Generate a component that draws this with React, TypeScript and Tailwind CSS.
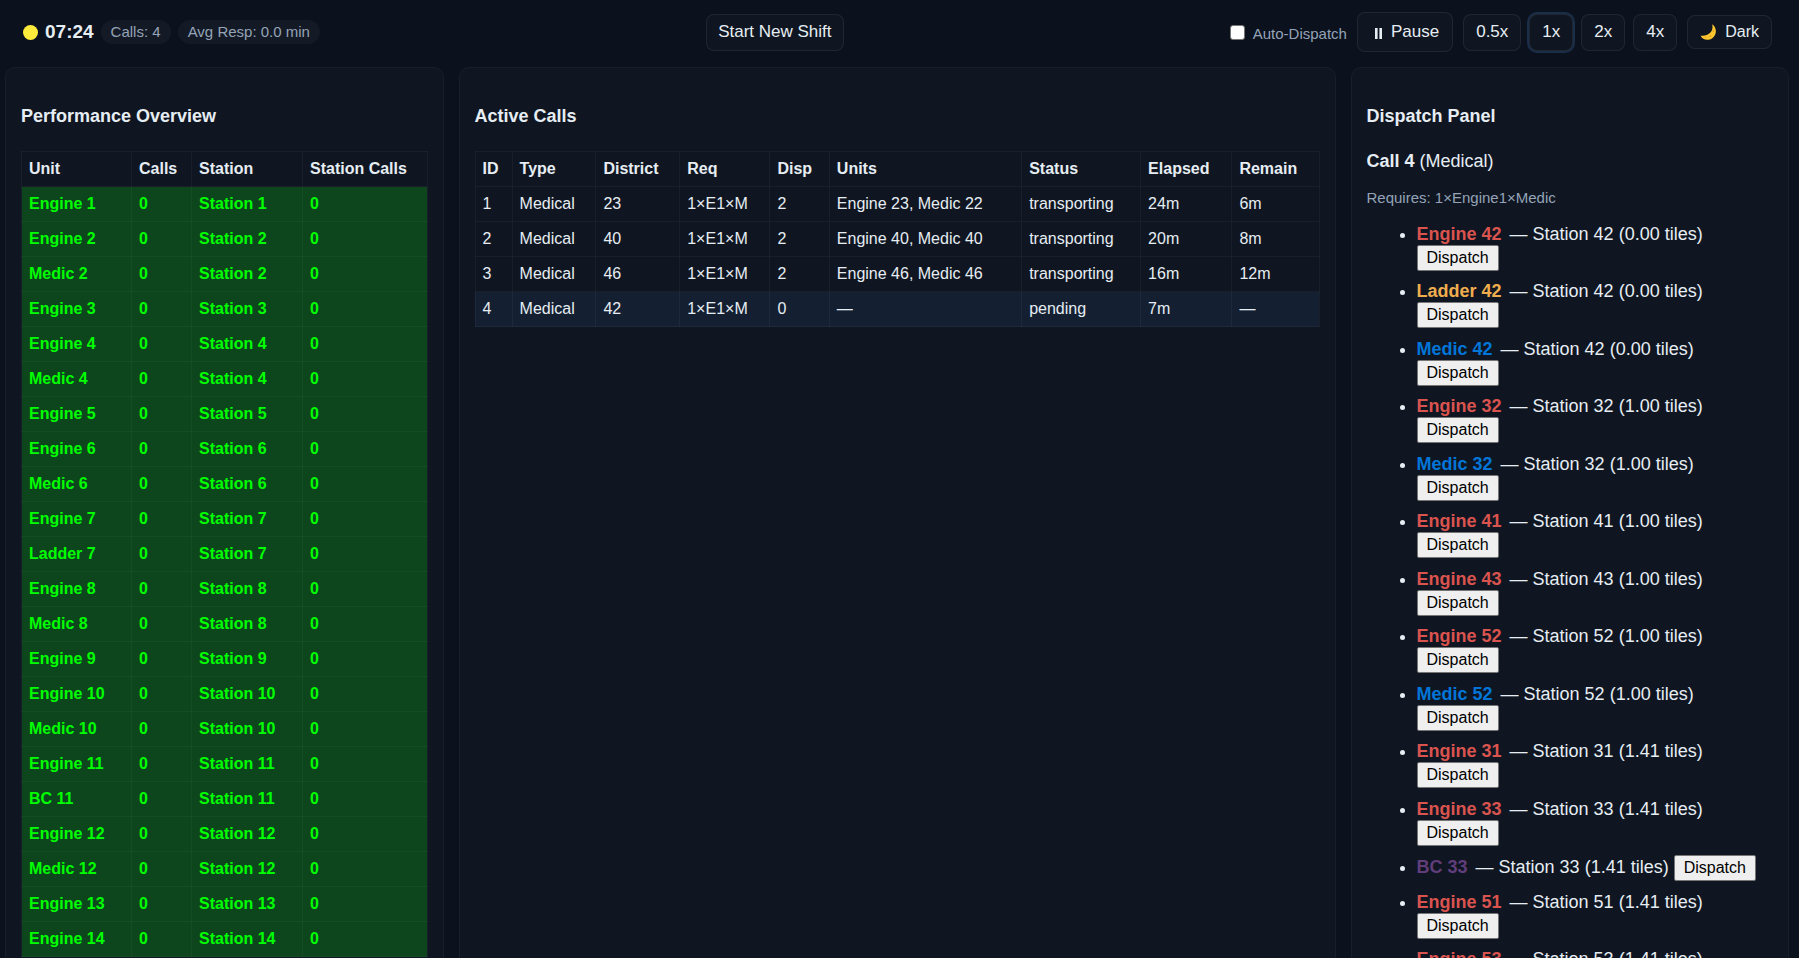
import { clsx } from 'clsx'

interface Unit {
  name: string
  station: number
}

interface Call {
  id: number
  type: string
  district: number
  req: string
  disp: number
  units: string
  status: string
  elapsed: string
  remain: string
}

interface Candidate extends Unit {
  tiles: string
}

const SPEEDS = ['0.5x', '1x', '2x', '4x']

const UNITS: Unit[] = [
  { name: 'Engine 1', station: 1 },
  { name: 'Engine 2', station: 2 },
  { name: 'Medic 2', station: 2 },
  { name: 'Engine 3', station: 3 },
  { name: 'Engine 4', station: 4 },
  { name: 'Medic 4', station: 4 },
  { name: 'Engine 5', station: 5 },
  { name: 'Engine 6', station: 6 },
  { name: 'Medic 6', station: 6 },
  { name: 'Engine 7', station: 7 },
  { name: 'Ladder 7', station: 7 },
  { name: 'Engine 8', station: 8 },
  { name: 'Medic 8', station: 8 },
  { name: 'Engine 9', station: 9 },
  { name: 'Engine 10', station: 10 },
  { name: 'Medic 10', station: 10 },
  { name: 'Engine 11', station: 11 },
  { name: 'BC 11', station: 11 },
  { name: 'Engine 12', station: 12 },
  { name: 'Medic 12', station: 12 },
  { name: 'Engine 13', station: 13 },
  { name: 'Engine 14', station: 14 },
]

const CALLS: Call[] = [
  { id: 1, type: 'Medical', district: 23, req: '1×E1×M', disp: 2, units: 'Engine 23, Medic 22', status: 'transporting', elapsed: '24m', remain: '6m' },
  { id: 2, type: 'Medical', district: 40, req: '1×E1×M', disp: 2, units: 'Engine 40, Medic 40', status: 'transporting', elapsed: '20m', remain: '8m' },
  { id: 3, type: 'Medical', district: 46, req: '1×E1×M', disp: 2, units: 'Engine 46, Medic 46', status: 'transporting', elapsed: '16m', remain: '12m' },
  { id: 4, type: 'Medical', district: 42, req: '1×E1×M', disp: 0, units: '—', status: 'pending', elapsed: '7m', remain: '—' },
]

const CANDIDATES: Candidate[] = [
  { name: 'Engine 42', station: 42, tiles: '0.00' },
  { name: 'Ladder 42', station: 42, tiles: '0.00' },
  { name: 'Medic 42', station: 42, tiles: '0.00' },
  { name: 'Engine 32', station: 32, tiles: '1.00' },
  { name: 'Medic 32', station: 32, tiles: '1.00' },
  { name: 'Engine 41', station: 41, tiles: '1.00' },
  { name: 'Engine 43', station: 43, tiles: '1.00' },
  { name: 'Engine 52', station: 52, tiles: '1.00' },
  { name: 'Medic 52', station: 52, tiles: '1.00' },
  { name: 'Engine 31', station: 31, tiles: '1.41' },
  { name: 'Engine 33', station: 33, tiles: '1.41' },
  { name: 'BC 33', station: 33, tiles: '1.41' },
  { name: 'Engine 51', station: 51, tiles: '1.41' },
  { name: 'Engine 53', station: 53, tiles: '1.41' },
]

const TYPE_COLORS: Record<string, string> = {
  Engine: 'text-[#d9534f]',
  Ladder: 'text-[#f0ad4e]',
  Medic: 'text-[#0275d8]',
  BC: 'text-[#613d7c]',
}

const btn = 'rounded-lg border border-white/7 bg-[#0f1621] text-[#e6edf3]'
const pill = 'rounded-full bg-white/4 px-[10px] text-[15px] leading-6 text-[#94a3b8]'
const panel = 'min-w-0 rounded-[10px] border border-white/4 bg-[#0f1621] px-[15px] pt-9'
const heading = 'mb-[23px] text-[18px] leading-6 font-bold'
const cell = 'border border-white/4 px-[7px] py-[7px] text-left'

function TopBar() {
  return (
    <header className="flex h-16 items-center justify-between pr-[27px] pl-[23px]">
      <div className="flex items-center gap-[7px]">
        <span className="h-[15px] w-[15px] rounded-full bg-[#ffeb3b]" />
        <span className="text-[19px] leading-6 font-bold">07:24</span>
        <span className={pill}>Calls: 4</span>
        <span className={pill}>Avg Resp: 0.0 min</span>
      </div>
      <button type="button" className={clsx(btn, 'h-[37px] px-[11px] text-[17px]')}>
        Start New Shift
      </button>
      <div className="flex items-center">
        <label className="mr-[10px] flex items-center gap-2 text-[15px] text-[#94a3b8]">
          <input
            type="checkbox"
            className="h-[15px] w-[15px] appearance-none rounded-[3px] border border-[#767676] bg-white"
          />
          <span className="pt-1">Auto-Dispatch</span>
        </label>
        <button type="button" className={clsx(btn, 'mr-[10px] flex h-10 items-center gap-2 pr-[13px] pl-4 text-[17px]')}>
          <svg width="9" height="16" viewBox="0 0 9 16" fill="currentColor" aria-hidden="true">
            <path d="M1 4h2.600v11H1zM5.400 4H8v11H5.400z" />
          </svg>
          Pause
        </button>
        <div className="mr-[10px] flex items-center gap-2">
          {SPEEDS.map((s) => (
            <button
              key={s}
              type="button"
              className={clsx(btn, 'h-[37px] px-3 text-[17px]', s === '1x' && 'ring-2 ring-[#1a2d49]')}
            >
              {s}
            </button>
          ))}
        </div>
        <button type="button" className={clsx(btn, 'flex h-[34px] items-center gap-2 px-3 text-[16px]')}>
          <svg width="17" height="18" viewBox="0 0 18 18" aria-hidden="true">
            <path
              d="M12.800 .8C18 4 18.200 12 13 15.600C8.500 18.600 2.500 17.400 .6 12.600C3.500 13.300 8 12.600 10.800 9.800C13.200 7.400 13.800 3.600 12.800 .8Z"
              fill="#fdc52e"
            />
            <circle cx="14" cy="8" r="0.900" fill="#e9a520" />
            <circle cx="11" cy="13.500" r="1" fill="#e9a520" />
            <circle cx="6" cy="14.500" r="0.700" fill="#e9a520" />
          </svg>
          Dark
        </button>
      </div>
    </header>
  )
}

function Performance() {
  return (
    <section className={panel}>
      <h3 className={heading}>Performance Overview</h3>
      <table className="w-full border-collapse text-[16px] leading-5">
        <thead>
          <tr>
            <th className={clsx(cell, 'w-[110px]')}>Unit</th>
            <th className={clsx(cell, 'w-[60px]')}>Calls</th>
            <th className={clsx(cell, 'w-[111px]')}>Station</th>
            <th className={cell}>Station Calls</th>
          </tr>
        </thead>
        <tbody className="bg-[#0d451d] font-bold text-[#00ff00]">
          {UNITS.map((u) => (
            <tr key={u.name}>
              <td className={cell}>{u.name}</td>
              <td className={cell}>0</td>
              <td className={cell}>Station {u.station}</td>
              <td className={cell}>0</td>
            </tr>
          ))}
        </tbody>
      </table>
    </section>
  )
}

function ActiveCalls() {
  return (
    <section className={panel}>
      <h3 className={heading}>Active Calls</h3>
      <table className="w-full border-collapse text-[16px] leading-5">
        <thead>
          <tr>
            <th className={cell}>ID</th>
            <th className={cell}>Type</th>
            <th className={cell}>District</th>
            <th className={cell}>Req</th>
            <th className={cell}>Disp</th>
            <th className={cell}>Units</th>
            <th className={cell}>Status</th>
            <th className={cell}>Elapsed</th>
            <th className={cell}>Remain</th>
          </tr>
        </thead>
        <tbody>
          {CALLS.map((c) => (
            <tr key={c.id} className={clsx(c.status === 'pending' && 'bg-[#142032]')}>
              <td className={cell}>{c.id}</td>
              <td className={cell}>{c.type}</td>
              <td className={cell}>{c.district}</td>
              <td className={cell}>{c.req}</td>
              <td className={cell}>{c.disp}</td>
              <td className={cell}>{c.units}</td>
              <td className={cell}>{c.status}</td>
              <td className={cell}>{c.elapsed}</td>
              <td className={cell}>{c.remain}</td>
            </tr>
          ))}
        </tbody>
      </table>
    </section>
  )
}

function DispatchPanel() {
  return (
    <section className={panel}>
      <h3 className="mb-[21px] text-[18px] leading-6 font-bold">Dispatch Panel</h3>
      <p className="mb-[15px] text-[18px] leading-6">
        <strong>Call 4</strong> (Medical)
      </p>
      <p className="mb-[15px] text-[15px] leading-5 text-[#94a3b8]">Requires: 1×Engine1×Medic</p>
      <ul className="list-disc pl-[50px] text-[18px]">
        {CANDIDATES.map((c) => (
          <li key={c.name} className="leading-[22px] odd:mb-[9px] even:mb-[10px]">
            <strong className={clsx('mr-[3px]', TYPE_COLORS[c.name.split(' ')[0]])}>{c.name}</strong>{' '}
            — Station {c.station} ({c.tiles} tiles){' '}
            <button
              type="button"
              className="rounded-[2px] border border-[#767676] bg-[#efefef] px-[9px] text-[16px] leading-6 text-black"
            >
              Dispatch
            </button>
          </li>
        ))}
      </ul>
    </section>
  )
}

export default function App() {
  return (
    <div className="flex h-screen flex-col overflow-hidden border-r-4 border-white bg-[#0b111d] font-['Liberation_Sans',Arial,sans-serif] text-[#e6edf3]">
      <TopBar />
      <main className="mt-[3px] grid min-h-0 flex-1 grid-cols-[1fr_2fr_1fr] gap-[15px] pr-[10px] pl-[5px]">
        <Performance />
        <ActiveCalls />
        <DispatchPanel />
      </main>
    </div>
  )
}
